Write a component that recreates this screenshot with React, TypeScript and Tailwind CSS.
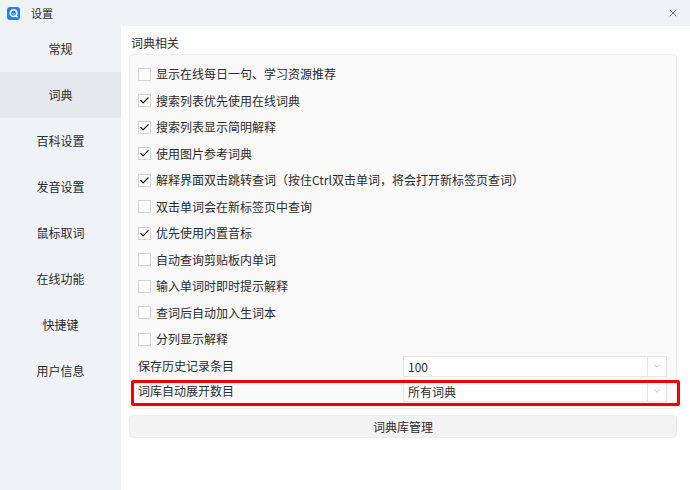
import { X, ChevronDown, Check } from "lucide-react";

const navItems = ["常规", "词典", "百科设置", "发音设置", "鼠标取词", "在线功能", "快捷键", "用户信息"];

const options: [string, boolean][] = [
  ["显示在线每日一句、学习资源推荐", false],
  ["搜索列表优先使用在线词典", true],
  ["搜索列表显示简明解释", true],
  ["使用图片参考词典", true],
  ["解释界面双击跳转查词（按住Ctrl双击单词，将会打开新标签页查词）", true],
  ["双击单词会在新标签页中查询", false],
  ["优先使用内置音标", true],
  ["自动查询剪贴板内单词", false],
  ["输入单词时即时提示解释", false],
  ["查词后自动加入生词本", false],
  ["分列显示解释", false],
];

function SelectRow({ label, value }: { label: string; value: string }) {
  return (
    <div className="flex items-center h-[25px]">
      <span className="w-[265px]">{label}</span>
      <div className="flex h-[21px] w-[264px] border border-[#e6e6e6] bg-white">
        <span className="flex-1 px-1 leading-[19px]">{value}</span>
        <div className="flex w-[19px] items-center justify-center border-l border-[#e6e6e6]">
          <ChevronDown className="w-2.5 h-2.5 text-[#b8b8b8]" />
        </div>
      </div>
    </div>
  );
}

export default function App() {
  return (
    <div className="relative flex h-[490px] w-[690px] flex-col overflow-hidden bg-[#eff3f8] text-[12px] text-[#2b2b2b] [font-family:'Noto_Sans_CJK_SC','Liberation_Sans',sans-serif]">
      {/* Title bar */}
      <div className="flex h-[26px] shrink-0 items-center pl-[7px] pr-[11px]">
        <div className="flex h-[13px] w-[13px] items-center justify-center rounded-[3px] bg-[#1a84f5]">
          <svg viewBox="0 0 13 13" className="h-[13px] w-[13px]">
            <circle cx="6.5" cy="6.2" r="3.3" fill="none" stroke="#fff" strokeWidth="1.6" />
            <path d="M8.6 8.6l2 1.6" stroke="#fff" strokeWidth="1.4" />
            <path d="M5 6.6q1.5 1.2 3 0" fill="none" stroke="#fff" strokeWidth="0.8" />
          </svg>
        </div>
        <span className="ml-[11px] text-[11px]">设置</span>
        <X className="ml-auto h-3 w-3 text-[#444]" strokeWidth={1.5} />
      </div>

      <div className="flex flex-1">
        {/* Sidebar */}
        <div className="w-[121px] shrink-0">
          {navItems.map((item) => (
            <div
              key={item}
              className={`flex h-[46px] items-center justify-center ${item === "词典" ? "bg-[#e4e8ec]" : ""}`}
            >
              {item}
            </div>
          ))}
        </div>

        {/* Main */}
        <div className="flex-1 bg-white pl-2 pr-[13px]">
          <div className="h-[28px] pl-[2px] pt-[8px] leading-[18px]">词典相关</div>

          <div className="h-[355px] rounded-[4px] border border-[#eeeeee] bg-[#f9f9f9] pl-2 pt-[6px]">
            {options.map(([label, checked]) => (
              <div key={label} className="flex h-[26.5px] items-center">
                <span className="flex h-[13px] w-[13px] items-center justify-center border border-[#d4d4d4] bg-white">
                  {checked && <Check className="h-[11px] w-[11px] text-black" strokeWidth={2.5} />}
                </span>
                <span className="ml-[5px]">{label}</span>
              </div>
            ))}
            <div className="mt-[1px]">
              <SelectRow label="保存历史记录条目" value="100" />
              <SelectRow label="词库自动展开数目" value="所有词典" />
            </div>
          </div>

          <div className="mt-[6px] flex h-[23px] items-center justify-center rounded-[4px] border border-[#ececec] bg-[#f3f3f3]">
            词典库管理
          </div>
        </div>
      </div>

      {/* Annotation */}
      <div className="absolute left-[131px] top-[380px] h-[26px] w-[549px] rounded-[2px] border-[3px] border-[#f50000]" />
    </div>
  );
}
